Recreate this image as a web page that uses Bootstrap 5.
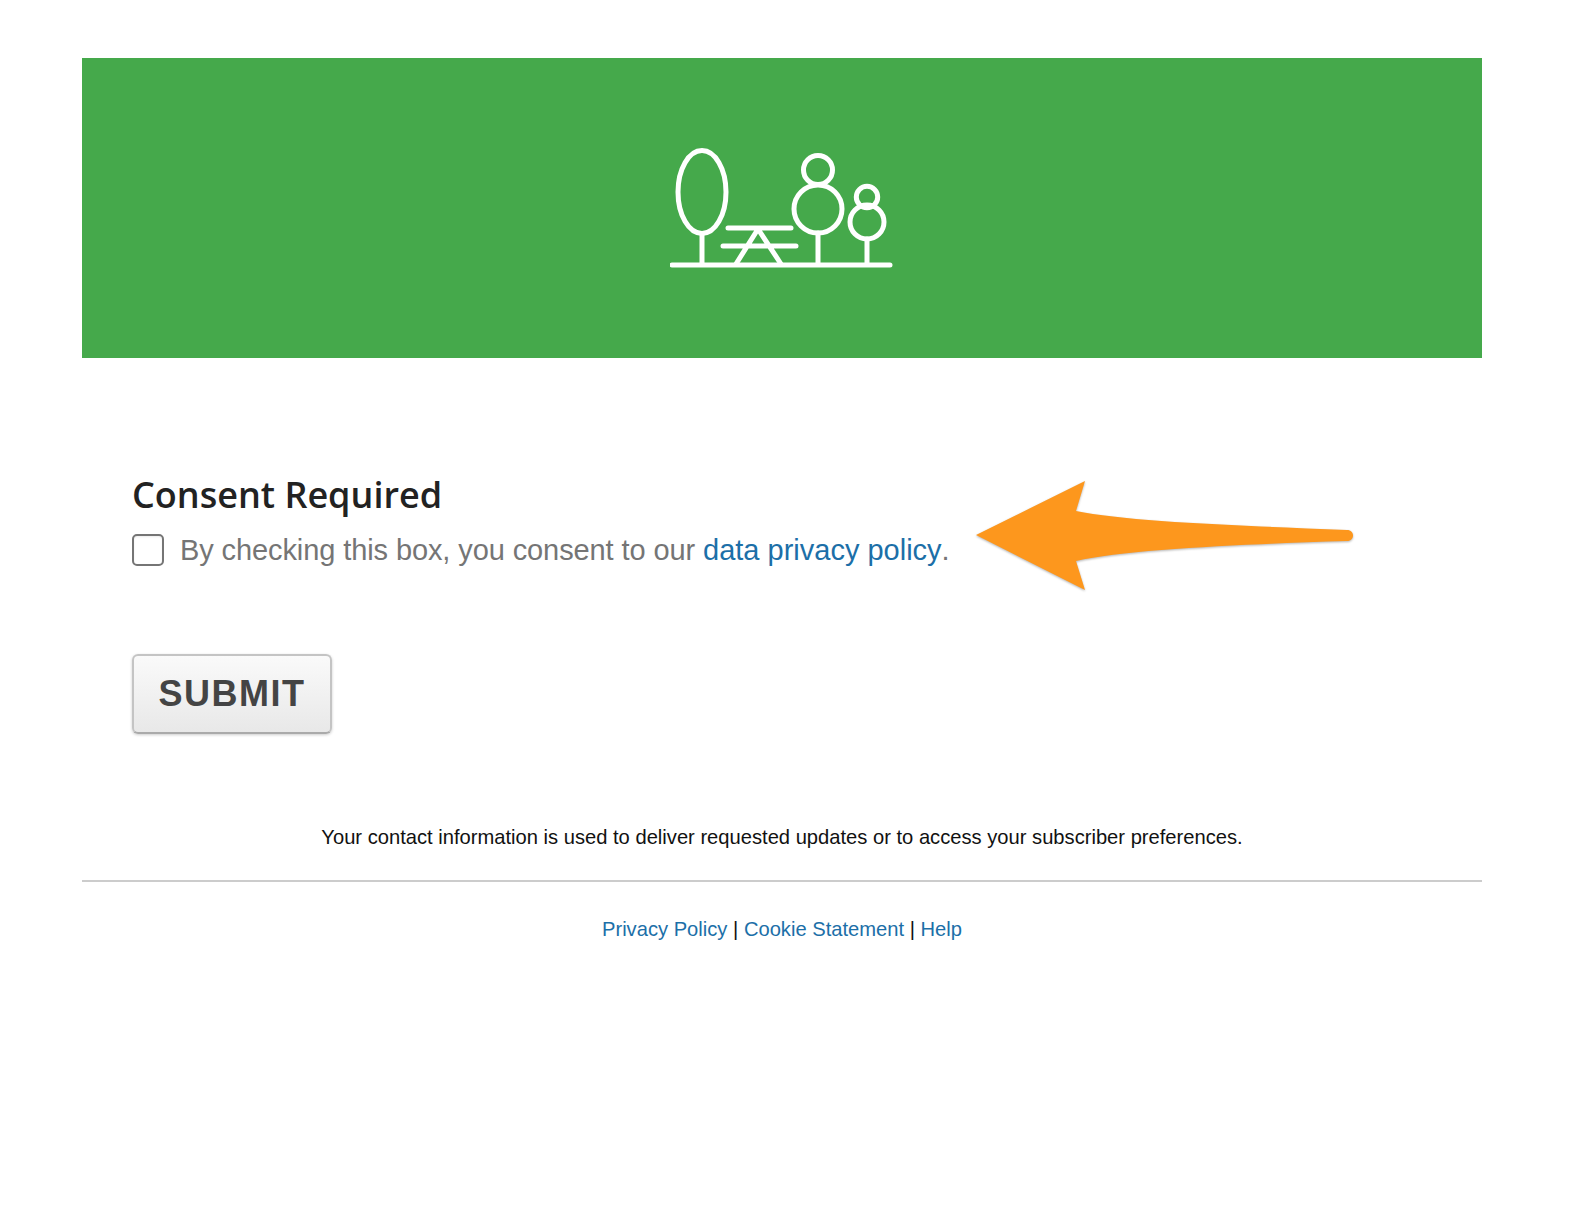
<!DOCTYPE html>
<html lang="en">
  <head>
    <meta charset="UTF-8" />
    <title>Consent Required</title>
    <link
      rel="stylesheet"
      href="https://cdn.jsdelivr.net/npm/bootstrap@5.3.0/dist/css/bootstrap.min.css"
    />
    <style>
      body {
        background: #fff;
        font-family: "Liberation Sans", Arial, sans-serif;
      }
      .page-wrap {
        margin: 58px 88px 0 82px;
      }
      .hero-band {
        height: 300px;
        background: #45a94b;
      }
      .consent-area {
        position: relative;
        padding: 115px 50px 0;
      }
      .consent-title {
        font-family: "Open Sans", "Noto Sans", sans-serif;
        font-weight: 600;
        font-size: 36px;
        line-height: 44px;
        color: #222;
        margin: 0 0 11px;
      }
      .consent-row {
        height: 44px;
        gap: 16px;
      }
      .consent-box.form-check-input {
        width: 32px;
        height: 32px;
        margin: 0;
        flex: none;
        border: 2px solid #757575;
        border-radius: 5px;
        box-shadow: inset 0 1px 2px rgba(0, 0, 0, 0.08);
      }
      .consent-text {
        position: relative;
        top: 1px;
        font-size: 29px;
        color: #757575;
        letter-spacing: -0.1px;
      }
      a.blue-link {
        color: #1c6fa8;
        text-decoration: none;
      }
      .consent-text a.blue-link {
        letter-spacing: 0;
      }
      .send-btn.btn {
        display: block;
        width: 200px;
        height: 80px;
        margin-top: 82px;
        padding: 0;
        font-size: 36px;
        font-weight: 700;
        letter-spacing: 1.5px;
        color: #444;
        background: linear-gradient(#fafafa, #e8e8e8);
        border: 2px solid #c4c4c4;
        border-bottom-color: #aaa;
        border-radius: 6px;
        box-shadow: 0 1px 3px rgba(0, 0, 0, 0.2);
      }
      .contact-note {
        margin: 89px 0 0;
        font-size: 20.16px;
        line-height: 28px;
        color: #111;
        text-align: center;
      }
      .split-line {
        margin: 29px 0 0;
        border: 0;
        border-top: 2px solid #ccc;
        opacity: 1;
      }
      .foot-links {
        margin-top: 33px;
        font-size: 20.16px;
        line-height: 28px;
        color: #111;
        text-align: center;
      }
      .point-arrow {
        position: absolute;
        left: 892px;
        top: 121px;
        filter: drop-shadow(0 1px 1px rgba(0, 0, 0, 0.3));
      }
    </style>
  </head>
  <body>
    <div class="page-wrap">
      <div class="hero-band d-flex align-items-center justify-content-center">
        <svg width="224" height="122" viewBox="670 146 224 122" fill="none" stroke="#fff" stroke-width="5" stroke-linecap="round" aria-hidden="true">
          <ellipse cx="702" cy="191" rx="24" ry="41.5" />
          <circle cx="818" cy="169" r="14.5" />
          <circle cx="818" cy="208" r="24" />
          <circle cx="867" cy="196" r="10.7" />
          <circle cx="867" cy="221" r="17" />
          <path d="M702 233V264M818 232V264M867 238V264M672 264H890" />
          <path d="M728 227H791M723 245H796M758 228L736 263M758 228L781 263" />
        </svg>
      </div>

      <div class="consent-area">
        <h2 class="consent-title">Consent Required</h2>
        <div class="consent-row d-flex align-items-center">
          <input class="consent-box form-check-input" type="checkbox" id="consent" />
          <label class="consent-text" for="consent">
            By checking this box, you consent to our
            <a class="blue-link" href="#">data privacy policy</a>.
          </label>
        </div>
        <button class="send-btn btn" type="button">SUBMIT</button>

        <svg class="point-arrow" width="382" height="115" viewBox="975 479 382 115" aria-hidden="true">
          <path fill="#fd971d" d="M977 535L1086 481L1077 511C1130 522 1250 526 1348 530C1356 530 1356 541 1348 541C1250 544 1130 549 1077 561L1086 590Z" />
        </svg>
      </div>

      <p class="contact-note">Your contact information is used to deliver requested updates or to access your subscriber preferences.</p>
      <hr class="split-line" />
      <div class="foot-links">
        <a class="blue-link" href="#">Privacy Policy</a> |
        <a class="blue-link" href="#">Cookie Statement</a> |
        <a class="blue-link" href="#">Help</a>
      </div>
    </div>
    <script src="https://cdn.jsdelivr.net/npm/bootstrap@5.3.0/dist/js/bootstrap.bundle.min.js"></script>
  </body>
</html>
